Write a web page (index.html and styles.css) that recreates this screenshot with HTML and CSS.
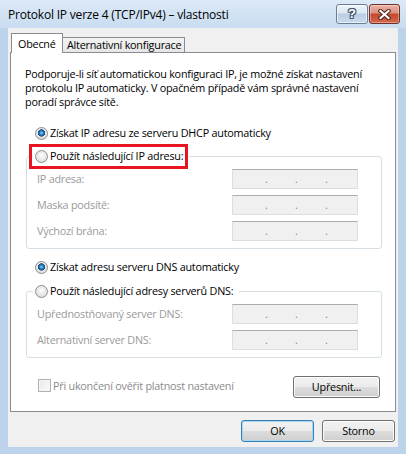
FILE: index.html
```html
<!DOCTYPE html>
<html lang="cs">
<head>
<meta charset="utf-8">
<title>Protokol IP verze 4 (TCP/IPv4) – vlastnosti</title>
<link rel="stylesheet" href="styles.css">
</head>
<body>
<div class="window">
  <div class="titlebar">
    <span class="title">Protokol IP verze 4 (TCP/IPv4) – vlastnosti</span>
    <div class="caption">
      <div class="cap help"><span class="qmark">?</span></div>
      <div class="cap close">
        <svg width="13" height="11" viewBox="0 0 13 11"><path d="M2.5 2 L10.5 9 M10.5 2 L2.5 9" stroke="#4a2018" stroke-width="4.2" stroke-linecap="square" fill="none"/><path d="M2.5 2 L10.5 9 M10.5 2 L2.5 9" stroke="#fff" stroke-width="2.2" stroke-linecap="square" fill="none"/></svg>
      </div>
    </div>
  </div>
  <div class="client">
    <div class="tabs">
      <div class="tab active">Obecné</div>
      <div class="tab inactive">Alternativní konfigurace</div>
    </div>
    <div class="panel">
      <p class="intro">Podporuje-li síť automatickou konfiguraci IP, je možné získat nastavení<br>protokolu IP automaticky. V opačném případě vám správné nastavení<br>poradí správce sítě.</p>
      <div class="opt top-opt first-opt"><span class="radio on"></span><span>Získat IP adresu ze serveru DHCP automaticky</span></div>
      <fieldset class="group group-ip">
        <legend><span class="opt"><span class="radio"></span><span>Použít následující IP adresu:</span><span class="highlight"></span></span></legend>
        <div class="field-row"><span class="lbl">IP adresa:</span><span class="ip"><span>.</span><span>.</span><span>.</span></span></div>
        <div class="field-row"><span class="lbl">Maska podsítě:</span><span class="ip"><span>.</span><span>.</span><span>.</span></span></div>
        <div class="field-row"><span class="lbl">Výchozí brána:</span><span class="ip"><span>.</span><span>.</span><span>.</span></span></div>
      </fieldset>
      <div class="opt top-opt dns-opt"><span class="radio on"></span><span>Získat adresu serveru DNS automaticky</span></div>
      <fieldset class="group group-dns">
        <legend><span class="opt"><span class="radio"></span><span>Použít následující adresy serverů DNS:</span></span></legend>
        <div class="field-row"><span class="lbl">Upřednostňovaný server DNS:</span><span class="ip"><span>.</span><span>.</span><span>.</span></span></div>
        <div class="field-row"><span class="lbl">Alternativní server DNS:</span><span class="ip"><span>.</span><span>.</span><span>.</span></span></div>
      </fieldset>
      <div class="bottom-row">
        <div class="check"><span class="box"></span><span>Při ukončení ověřit platnost nastavení</span></div>
        <div class="btn adv">Upřesnit...</div>
      </div>
    </div>
    <div class="actions">
      <div class="btn default">OK</div>
      <div class="btn">Storno</div>
    </div>
  </div>
</div>
</body>
</html>
```
FILE: styles.css
```css
* { box-sizing: border-box; }
body {
  margin: 0;
  font-family: "Open Sans", "Noto Sans", sans-serif;
  font-size: 10.8px;
  letter-spacing: -0.23px;
  color: #000;
}
.window {
  width: 406px;
  height: 454px;
  background: #bdd3ec;
  display: flex;
  flex-direction: column;
}
.titlebar {
  height: 28px;
  flex: none;
  display: flex;
  align-items: flex-start;
  background: linear-gradient(#dce9f7, #c9dcf0);
}
.title {
  margin: 6px 0 0 8px;
  font-size: 12px;
  letter-spacing: -0.2px;
  line-height: 18px;
  white-space: nowrap;
  color: #000;
}
.caption {
  margin: 4px 6px 0 auto;
  display: flex;
  gap: 1px;
}
.cap {
  height: 20px;
  border-radius: 3px;
  display: flex;
  align-items: center;
  justify-content: center;
}
.help {
  width: 32px;
  border: 1px solid #6b7c93;
  background: linear-gradient(#eef4fb, #dbe6f3 45%, #b9cde4 50%, #c9daee);
  box-shadow: inset 0 0 0 1px rgba(255,255,255,0.6);
}
.qmark {
  font: bold 13px "Liberation Sans", sans-serif;
  letter-spacing: 0;
  color: #fff;
  line-height: 14px;
  text-shadow: 1px 0 #46546a, -1px 0 #46546a, 0 1px #46546a, 0 -1px #46546a, 1px 1px #46546a, -1px -1px #46546a, 1px -1px #46546a, -1px 1px #46546a;
}
.close {
  width: 31px;
  border: 1px solid #6d3127;
  background: linear-gradient(#ebb3a6, #da8f7e 45%, #c4472f 50%, #d5664c);
  box-shadow: inset 0 0 0 1px rgba(255,255,255,0.35);
}
.client {
  flex: 1;
  margin: 0 8px 7px;
  background: #f0f0f0;
  padding: 5px 2px 5px 2px;
  display: flex;
  flex-direction: column;
}
.tabs {
  display: flex;
  align-items: flex-end;
  height: 19px;
  flex: none;
  padding-left: 1px;
}
.tab {
  border: 1px solid #898c95;
  border-bottom: 0;
  white-space: nowrap;
}
.tab.active {
  width: 52px;
  height: 20px;
  margin-bottom: -1px;
  background: #fff;
  padding: 1px 0 0 6px;
  line-height: 17px;
  position: relative;
  z-index: 1;
}
.tab.inactive {
  width: 122px;
  height: 15px;
  border-left: 0;
  background: linear-gradient(#f3f3f3, #e6e6e6);
  padding-left: 4px;
  line-height: 14px;
}
.panel {
  flex: none;
  height: 360px;
  border: 1px solid #898c95;
  background: #fff;
  padding: 14px 13px 13px 14px;
  display: flex;
  flex-direction: column;
}
.intro {
  margin: 0;
  line-height: 14px;
  white-space: nowrap;
}
.opt {
  display: flex;
  align-items: center;
  height: 16px;
  line-height: 16px;
  white-space: nowrap;
  gap: 2px;
  position: relative;
}
.top-opt { margin-left: 10px; }
.first-opt { margin-top: 16px; }
.dns-opt { margin-top: 10px; }
.radio {
  flex: none;
  width: 13px;
  height: 13px;
  border-radius: 50%;
  border: 1px solid #8c8e90;
  background: radial-gradient(circle at 50% 40%, #fdfdfd, #e2e2e2 65%, #cfcfcf);
}
.radio.on {
  background:
    radial-gradient(circle at 50% 45%, #8fdcff 0, #2c8ad0 1.6px, #17497c 3.4px, rgba(255,255,255,0) 3.9px),
    radial-gradient(circle at 50% 40%, #fdfdfd, #e2e2e2 65%, #cfcfcf);
}
.highlight {
  position: absolute;
  left: -6px;
  top: -4px;
  width: 159px;
  height: 25px;
  border: 3px solid #e8141f;
  pointer-events: none;
}
.group {
  margin: 0 0 0 1px;
  border: 1px solid #d5dfe5;
  border-radius: 3px;
  padding: 0 23px 7px 6px;
  min-width: 0;
}
.group-ip { margin-top: 7px; }
.group-dns { margin-top: 8px; }
.group legend {
  padding: 0 6px 0 2px;
  margin: 0;
}
.field-row {
  display: grid;
  grid-template-columns: 1fr 126px;
  align-items: center;
  padding-left: 4px;
  margin-top: 6px;
}
.group legend + .field-row { margin-top: 5px; }
.lbl {
  color: #9a9a9a;
  line-height: 16px;
  white-space: nowrap;
}
.ip {
  height: 20px;
  border: 1px solid #dadfe6;
  border-top-color: #abadb3;
  background: #f0f0f0;
  display: flex;
  padding-left: 32px;
  line-height: 18px;
  color: #7f8790;
}
.ip span { width: 30px; }
.bottom-row {
  display: flex;
  align-items: flex-start;
  margin-top: 18px;
  height: 22px;
}
.check {
  display: flex;
  align-items: center;
  gap: 2px;
  height: 13px;
  line-height: 13px;
  margin: 3px 0 0 13px;
  color: #8a8a8a;
  white-space: nowrap;
}
.box {
  width: 13px;
  height: 13px;
  border: 1px solid #b1b1b1;
  background: linear-gradient(135deg, #e9e9e9, #fbfbfb);
  box-shadow: inset 0 0 0 1px #f4f4f4;
}
.btn {
  height: 22px;
  border: 1px solid #707070;
  border-radius: 3px;
  background: linear-gradient(#f2f2f2 0, #ebebeb 50%, #dddddd 50%, #cfcfcf 100%);
  box-shadow: inset 0 0 0 1px #fbfbfb;
  display: flex;
  align-items: center;
  justify-content: center;
  line-height: 18px;
  white-space: nowrap;
}
.adv {
  width: 87px;
  margin: 0 2px 0 auto;
}
.actions {
  display: flex;
  justify-content: flex-end;
  gap: 8px;
  margin: 8px 1px 0 0;
}
.actions .btn { width: 73px; }
.btn.default {
  border-color: #3c7fb1;
  box-shadow: inset 0 0 0 1px #a3d8f5;
}
```
